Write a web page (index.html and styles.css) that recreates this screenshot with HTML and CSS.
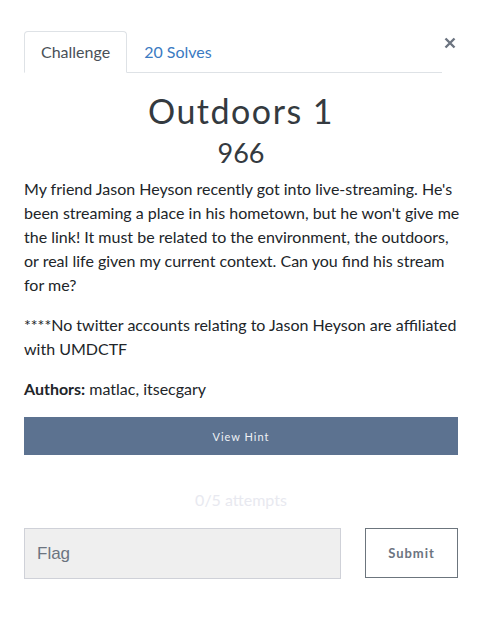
FILE: index.html
```html
<!DOCTYPE html>
<html>
<head>
<meta charset="utf-8">
<link rel="stylesheet" href="styles.css">
</head>
<body>
<div class="modal">
  <div class="tabs-row">
    <ul class="tabs">
      <li class="tab active">Challenge</li>
      <li class="tab link">20 Solves</li>
    </ul>
    <button class="close" aria-label="Close">
      <svg width="12" height="12" viewBox="0 0 12 12"><path d="M1.5 1.5 L10.5 10.5 M10.5 1.5 L1.5 10.5" stroke="#6c7480" stroke-width="2.4" stroke-linecap="butt"/></svg>
    </button>
  </div>
  <h3 class="title">Outdoors 1</h3>
  <h4 class="value">966</h4>
  <div class="desc">
    <p>My friend Jason Heyson recently got into live-streaming. He's been streaming a place in his hometown, but he won't give me the link! It must be related to the environment, the outdoors, or real life given my current context. Can you find his stream for me?</p>
    <p>****No twitter accounts relating to Jason Heyson are affiliated with UMDCTF</p>
    <p><strong>Authors:</strong> matlac, itsecgary</p>
  </div>
  <button class="hint">View Hint</button>
  <div class="attempts">0/5 attempts</div>
  <div class="submit-row">
    <input class="flag" type="text" placeholder="Flag">
    <button class="submit">Submit</button>
  </div>
</div>
</body>
</html>
```
FILE: styles.css
```css
html, body { margin: 0; padding: 0; background: #fff; }
body { font-family: Lato, "Open Sans", sans-serif; color: #212529; }
.modal { padding: 31px 29px 0 24px; }
.tabs-row { display: flex; align-items: flex-start; }
.tabs { flex: 1; display: flex; list-style: none; margin: 0; padding: 0; border-bottom: 1px solid #dee2e6; }
.tab { font-size: 16px; line-height: 24px; padding: 8px 16px; border: 1px solid transparent; border-top-left-radius: 4px; border-top-right-radius: 4px; margin-bottom: -1px; }
.tab.active { color: #495057; border-color: #dee2e6 #dee2e6 #fff; background: #fff; }
.tab.link { color: #3a7ac2; }
.close { background: none; border: 0; padding: 0; margin: 6px 2px 0 2px; width: 12px; height: 12px; display: flex; }
.title { font-family: Lato, sans-serif; font-weight: 400; font-size: 34px; letter-spacing: 1.5px; text-align: center; color: #343a40; margin: 18px 0 0; line-height: 40px; }
.value { font-weight: 400; font-size: 27px; text-align: center; color: #343a40; margin: 4px 0 0; line-height: 36px; }
.desc { margin-top: 6px; margin-right: -5px; font-size: 16px; line-height: 24px; }
.desc p { margin: 0 0 16px; }
.desc strong { font-weight: 700; }
.hint { display: block; width: 100%; height: 38px; margin-top: 4px; background: #5c7290; border: 0; color: #eef1f5; font-family: Lato, sans-serif; font-size: 11px; letter-spacing: 1px; }
.attempts { text-align: center; color: #e8e9f0; font-size: 16px; line-height: 24px; margin-top: 33px; }
.submit-row { display: flex; gap: 24px; margin-top: 16px; }
.flag { flex: 1; height: 51px; box-sizing: border-box; border: 1px solid #cfd1d8; background: #efefef; font-family: "Liberation Sans", Arial, sans-serif; font-size: 17px; padding: 0 12px; color: #495057; }
.flag::placeholder { color: #6c7480; }
.submit { width: 93px; height: 50px; box-sizing: border-box; background: #fff; border: 1px solid #6c757d; color: #6c7480; font-family: Lato, sans-serif; font-weight: 700; font-size: 13px; letter-spacing: 1px; }
```
